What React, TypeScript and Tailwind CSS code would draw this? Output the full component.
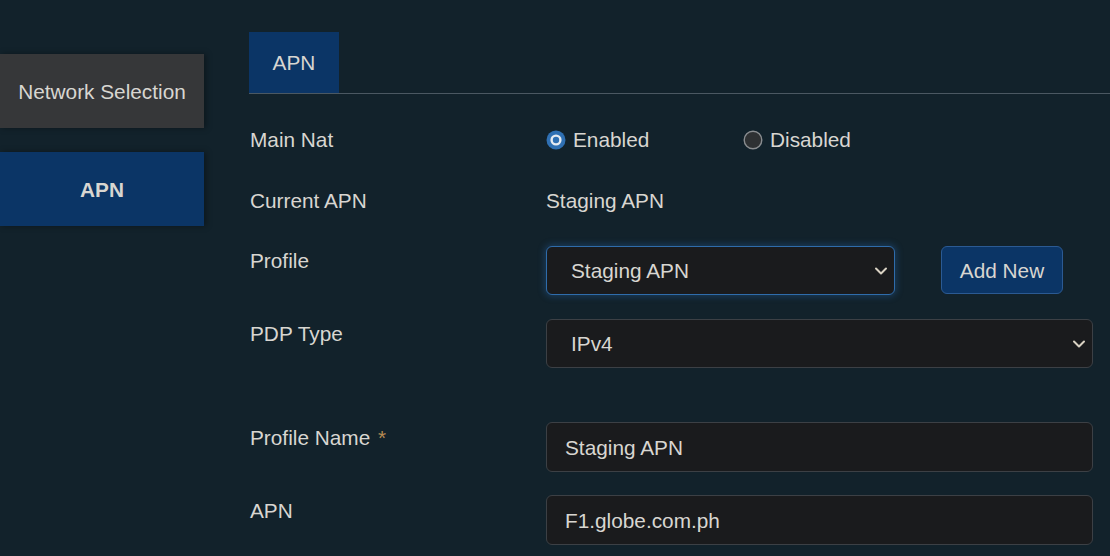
import React from "react";

const Chevron = () => (
  <svg width="14" height="10" viewBox="0 0 14 10" className="shrink-0">
    <path d="M2 2.5 L7 7.5 L12 2.5" fill="none" stroke="#d9d2c3" strokeWidth="2" strokeLinecap="round" strokeLinejoin="round" />
  </svg>
);

const RadioOn = () => (
  <svg width="20" height="20" viewBox="0 0 20 20" className="shrink-0">
    <circle cx="10" cy="10" r="9.5" fill="#2f70b3" />
    <circle cx="10" cy="10" r="5.6" fill="#e6ebf1" />
    <circle cx="10" cy="10" r="3.2" fill="#2f70b3" />
  </svg>
);

const RadioOff = () => (
  <svg width="20" height="20" viewBox="0 0 20 20" className="shrink-0">
    <circle cx="10" cy="10" r="8.8" fill="#2e3133" stroke="#8a8d90" strokeWidth="1.4" />
  </svg>
);

export default function App() {
  return (
    <div
      className="w-[1110px] h-[556px] overflow-hidden bg-[#12222b] text-[#d8d6d1] text-[20.8px] leading-[31px] flex"
      style={{ fontFamily: '"Liberation Sans", Arial, sans-serif' }}
    >
      {/* Sidebar */}
      <div className="w-[204px] shrink-0 pt-[54px] flex flex-col gap-[24px]">
        <div className="h-[74px] bg-[#363739] flex items-center justify-center shadow-[2px_0_6px_rgba(0,0,0,0.35)]">
          Network Selection
        </div>
        <div className="h-[74px] bg-[#0b3566] flex items-center justify-center font-bold shadow-[2px_0_6px_rgba(0,0,0,0.35)]">
          APN
        </div>
      </div>

      {/* Main */}
      <div className="flex-1 pl-[45px] pr-[17px] pt-[32px]">
        <div className="flex border-b border-[#4b5862] w-[calc(100%+17px)]">
          <div className="w-[90px] h-[61px] bg-[#0b3566] flex items-center justify-center">APN</div>
        </div>

        <div className="pl-[1px] pt-[30px] flex flex-col">
          {/* Main Nat */}
          <div className="flex items-center h-[31px]">
            <div className="w-[296px] shrink-0">Main Nat</div>
            <div className="flex items-center">
              <div className="flex items-center gap-[7px] w-[197px]">
                <RadioOn />
                <span>Enabled</span>
              </div>
              <div className="flex items-center gap-[7px]">
                <RadioOff />
                <span>Disabled</span>
              </div>
            </div>
          </div>

          {/* Current APN */}
          <div className="flex items-center h-[31px] mt-[30px]">
            <div className="w-[296px] shrink-0">Current APN</div>
            <div>Staging APN</div>
          </div>

          {/* Profile */}
          <div className="flex items-start mt-[30px]">
            <div className="w-[296px] shrink-0 -mt-[1px]">Profile</div>
            <div className="flex items-start gap-[46px]">
              <div className="w-[349px] h-[49px] rounded-[6px] bg-[#1a1b1d] border border-[#2f6cab] shadow-[0_0_6px_2px_rgba(40,100,170,0.35)] flex items-center justify-between pl-[24px] pr-[6px]">
                <span>Staging APN</span>
                <Chevron />
              </div>
              <div className="w-[122px] h-[48px] rounded-[6px] bg-[#0b3566] border border-[#2b5a93] flex items-center justify-center">
                Add New
              </div>
            </div>
          </div>

          {/* PDP Type */}
          <div className="flex items-start mt-[24px]">
            <div className="w-[296px] shrink-0 -mt-[1px]">PDP Type</div>
            <div className="flex-1 h-[49px] rounded-[6px] bg-[#1a1b1d] border border-[#3c4045] flex items-center justify-between pl-[24px] pr-[6px]">
              <span>IPv4</span>
              <Chevron />
            </div>
          </div>

          {/* Profile Name */}
          <div className="flex items-start mt-[54px]">
            <div className="w-[296px] shrink-0">
              Profile Name <span className="text-[#b58a52] ml-[2px]">*</span>
            </div>
            <div className="flex-1 h-[50px] rounded-[6px] bg-[#1a1b1d] border border-[#3c4045] flex items-center pl-[18px]">
              Staging APN
            </div>
          </div>

          {/* APN */}
          <div className="flex items-start mt-[23px]">
            <div className="w-[296px] shrink-0">APN</div>
            <div className="flex-1 h-[50px] rounded-[6px] bg-[#1a1b1d] border border-[#3c4045] flex items-center pl-[18px]">
              F1.globe.com.ph
            </div>
          </div>
        </div>
      </div>
    </div>
  );
}
